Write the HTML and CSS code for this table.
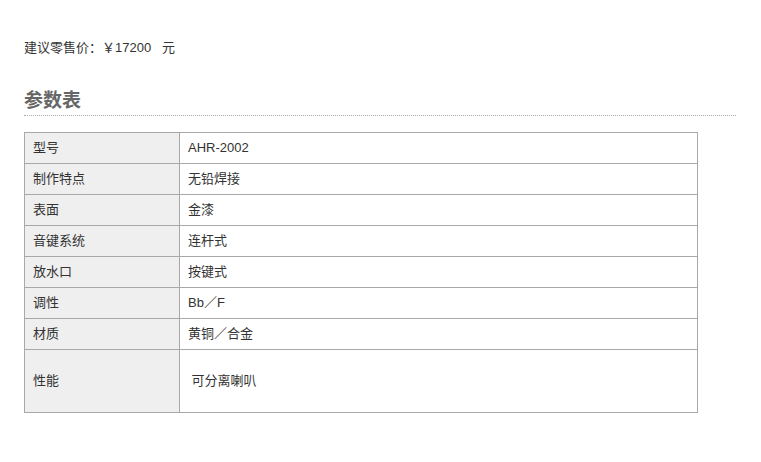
FILE: index.html
```html
<!DOCTYPE html>
<html>
<head>
<meta charset="utf-8">
<link rel="stylesheet" href="styles.css">
</head>
<body>
<div class="page">
  <p class="price">建议零售价：￥17200&nbsp;&nbsp; 元</p>
  <h2 class="title">参数表</h2>
  <table class="spec">
    <tr><td class="k">型号</td><td class="v">AHR-2002</td></tr>
    <tr><td class="k">制作特点</td><td class="v">无铅焊接</td></tr>
    <tr><td class="k">表面</td><td class="v">金漆</td></tr>
    <tr><td class="k">音键系统</td><td class="v">连杆式</td></tr>
    <tr><td class="k">放水口</td><td class="v">按键式</td></tr>
    <tr><td class="k">调性</td><td class="v">Bb／F</td></tr>
    <tr><td class="k">材质</td><td class="v">黄铜／合金</td></tr>
    <tr class="tall"><td class="k">性能</td><td class="v">&nbsp;可分离喇叭</td></tr>
  </table>
</div>
</body>
</html>
```
FILE: styles.css
```css
html, body { margin: 0; padding: 0; background: #fff; }
body {
  font-family: "Liberation Sans", Arial, "Noto Sans CJK SC", sans-serif;
  font-size: 13px;
  color: #333;
}
.page { padding: 40px 25px 0 24px; }
.price { margin: 0; height: 16px; line-height: 16px; }
.title {
  margin: 34px 0 0 0;
  font-size: 19px;
  font-weight: bold;
  color: #666;
  line-height: 22px;
  height: 22px;
  padding-bottom: 3px;
  border-bottom: 1px dotted #aaa;
}
.spec {
  margin-top: 16px;
  border-collapse: collapse;
  width: 674px;
}
.spec td {
  border: 1px solid #a8a8a8;
  height: 30px;
  padding: 0 7px 0 8px;
  line-height: 16px;
  vertical-align: middle;
}
.spec .k { width: 139px; background: #efefef; }
.spec .tall td { height: 62px; }
```
